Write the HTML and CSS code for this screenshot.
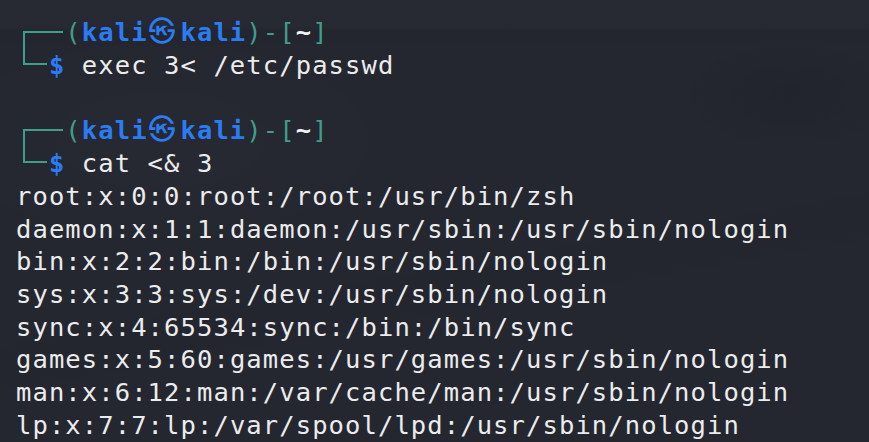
FILE: index.html
```html
<!DOCTYPE html>
<html lang="en">
<head>
<meta charset="utf-8">
<title>kali terminal</title>
<link rel="stylesheet" href="styles.css">
</head>
<body>
<div class="term">
<div class="line"><span class="bend-top" aria-hidden="true"></span><span class="frame">(</span><span class="user">kali<span class="at">㉿</span>kali</span><span class="frame">)-[</span><span class="dir">~</span><span class="frame">]</span></div>
<div class="line"><span class="bend-bot" aria-hidden="true"></span><span class="user">$</span> exec 3&lt; /etc/passwd</div>
<div class="line"> </div>
<div class="line"><span class="bend-top" aria-hidden="true"></span><span class="frame">(</span><span class="user">kali<span class="at">㉿</span>kali</span><span class="frame">)-[</span><span class="dir">~</span><span class="frame">]</span></div>
<div class="line"><span class="bend-bot" aria-hidden="true"></span><span class="user">$</span> cat &lt;&amp; 3</div>
<div class="line">root:x:0:0:root:/root:/usr/bin/zsh</div>
<div class="line">daemon:x:1:1:daemon:/usr/sbin:/usr/sbin/nologin</div>
<div class="line">bin:x:2:2:bin:/bin:/usr/sbin/nologin</div>
<div class="line">sys:x:3:3:sys:/dev:/usr/sbin/nologin</div>
<div class="line">sync:x:4:65534:sync:/bin:/bin/sync</div>
<div class="line">games:x:5:60:games:/usr/games:/usr/sbin/nologin</div>
<div class="line">man:x:6:12:man:/var/cache/man:/usr/sbin/nologin</div>
<div class="line">lp:x:7:7:lp:/var/spool/lpd:/usr/sbin/nologin</div>
</div>
</body>
</html>
```
FILE: styles.css
```css
html, body {
  margin: 0;
  padding: 0;
  height: 100%;
  overflow: hidden;
}
body {
  background-color: #242730;
  background-image:
    linear-gradient(180deg, rgba(255,255,255,0.012) 0px, rgba(255,255,255,0.012) 26px, rgba(0,0,0,0.03) 32px, rgba(0,0,0,0) 55px),
    radial-gradient(ellipse 120px 60px at 790px 95px, rgba(0,0,0,0.08), rgba(0,0,0,0) 100%),
    linear-gradient(170deg, rgba(0,0,0,0) 0px, rgba(0,0,0,0) 330px, rgba(0,0,0,0.04) 360px, rgba(0,0,0,0) 400px),
    radial-gradient(ellipse 260px 120px at 160px 140px, rgba(255,255,255,0.012), rgba(255,255,255,0) 100%);
}
.term {
  padding: 16.4px 0 0 16px;
  font-family: "DejaVu Sans Mono", "Liberation Mono", monospace;
  font-size: 25.5px;
  letter-spacing: 1.1px;
  line-height: 32.7px;
  color: #ececec;
}
.line {
  height: 32.7px;
  white-space: pre;
}
.bend-top,
.bend-bot {
  display: inline-block;
  position: relative;
  height: 32.7px;
  vertical-align: top;
}
.bend-top {
  width: 49.35px;
}
.bend-bot {
  width: 32.9px;
}
.bend-top::after {
  content: "";
  position: absolute;
  left: 7px;
  right: 2.3px;
  top: 14.2px;
  height: 32.7px;
  border-top: 2px solid #3f9e8b;
  border-left: 2px solid #3f9e8b;
}
.bend-bot::after {
  content: "";
  position: absolute;
  left: 7px;
  right: 1.9px;
  top: 14.2px;
  height: 0;
  border-top: 2px solid #3f9e8b;
}
.frame {
  color: #3f9e8b;
}
.user {
  color: #2b7cf2;
  font-weight: bold;
}
.dir {
  color: #f2f2f2;
  font-weight: bold;
}
.at {
  display: inline-block;
  width: 32.9px;
  text-align: left;
  text-indent: 1px;
  letter-spacing: 0;
  font-family: "Noto Sans CJK JP", "Noto Sans CJK SC", sans-serif;
  font-weight: normal;
  font-size: 27px;
  line-height: 1;
}
```
